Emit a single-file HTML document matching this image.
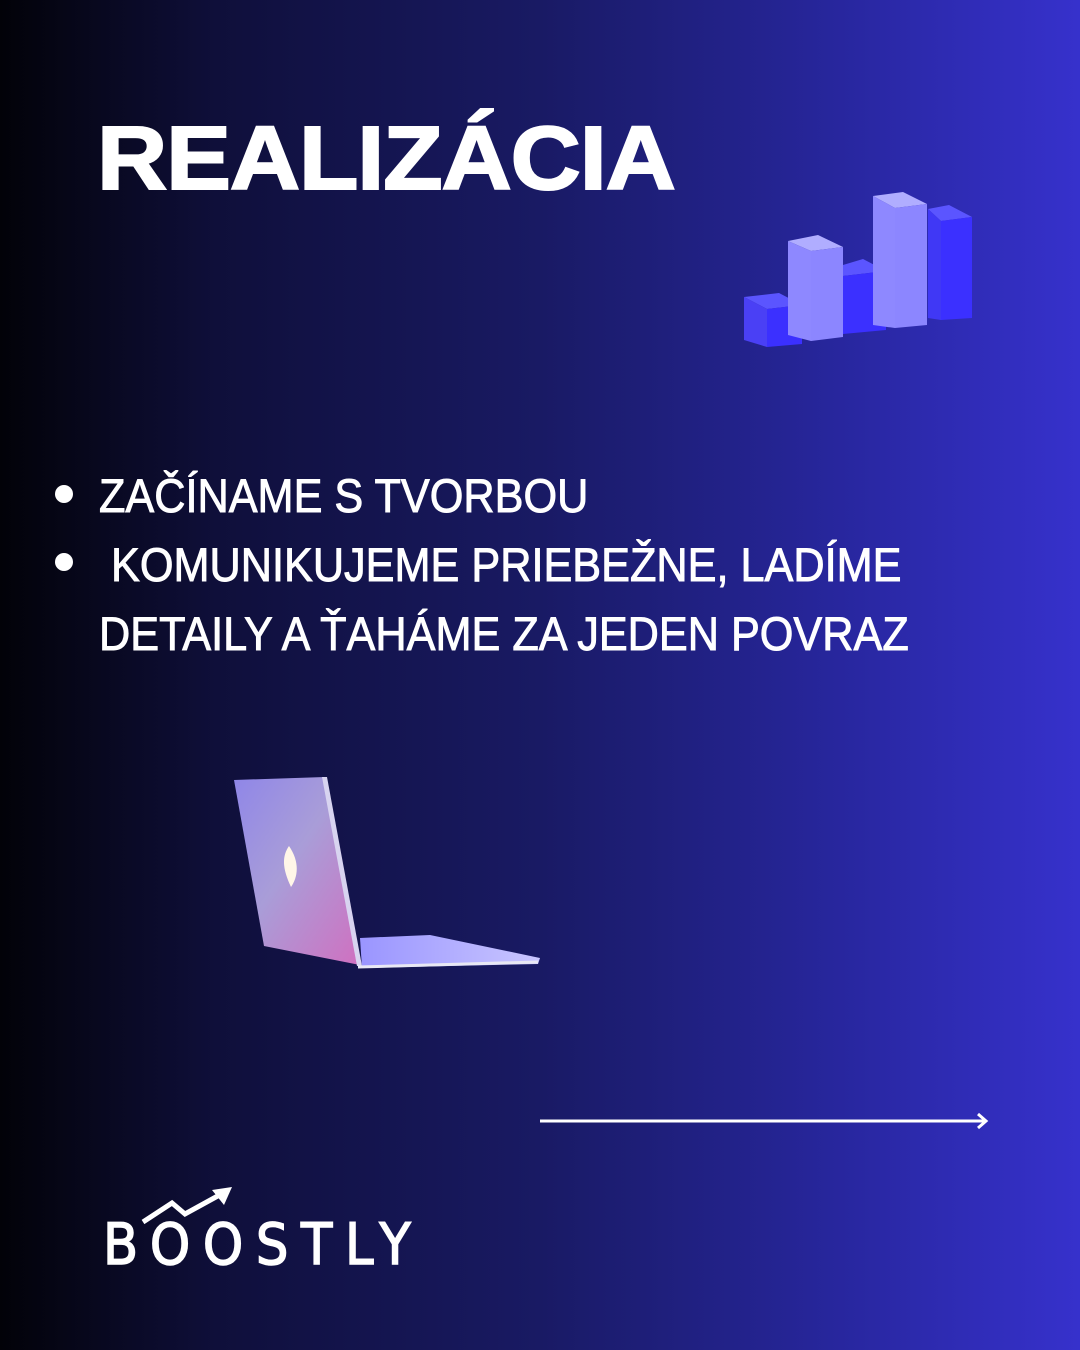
<!DOCTYPE html>
<html><head><meta charset="utf-8"><style>
html,body{margin:0;padding:0}
body{width:1080px;height:1350px;overflow:hidden;position:relative;background:linear-gradient(90deg,#020208 0%,#0f0f3a 20%,#191a64 50%,#262598 75%,#3631cc 100%);font-family:"Liberation Sans",sans-serif;color:#fff}
.t{position:absolute;left:97px;top:108px;font-size:90px;font-weight:bold;letter-spacing:-1px;transform-origin:left top;transform:scaleX(1.08);white-space:nowrap;-webkit-text-stroke:2px #fff}
.b{position:absolute;font-size:47px;transform-origin:left top;transform:scaleX(0.92);white-space:nowrap;line-height:1;-webkit-text-stroke:0.9px #fff}
.dot{position:absolute;width:18px;height:18px;border-radius:50%;background:#fff}
</style></head><body>
<div class="t">REALIZÁCIA</div>
<div class="dot" style="left:55px;top:485px"></div>
<div class="dot" style="left:55px;top:553px"></div>
<div class="b" style="left:99px;top:472px">ZAČÍNAME S TVORBOU</div>
<div class="b" style="left:99px;top:541px">&nbsp;KOMUNIKUJEME PRIEBEŽNE, LADÍME</div>
<div class="b" style="left:99px;top:610px">DETAILY A ŤAHÁME ZA JEDEN POVRAZ</div>
<svg style="position:absolute;left:0;top:0" width="1080" height="1350">
<g>
<polygon points="744,297 779,293 802,305 767,309" fill="#5b55ff"/>
<polygon points="744,297 767,309 767,347 744,340" fill="#4a40f5"/>
<polygon points="767,309 802,305 802,344 767,347" fill="#3b30ff"/>
<polygon points="843,265 863,259 886,271 843,276" fill="#5b55ff"/>
<polygon points="843,276 886,271 886,330 843,334" fill="#3b30ff"/>
<polygon points="788,241 818,235 843,247 811,251" fill="#b0adff"/>
<polygon points="788,241 811,251 811,341 788,335" fill="#8e88ff"/>
<polygon points="811,251 843,247 843,337 811,341" fill="#8c86ff"/>
<polygon points="928,209 949,205 972,217 941,221" fill="#5b55ff"/>
<polygon points="928,209 941,221 941,320 928,318" fill="#4038f5"/>
<polygon points="941,221 972,217 972,318 941,320" fill="#3b30ff"/>
<polygon points="873,196 903,192 927,204 895,208" fill="#b0adff"/>
<polygon points="873,196 895,208 895,328 873,325" fill="#8e88ff"/>
<polygon points="895,208 927,204 927,325 895,328" fill="#8c86ff"/>
</g>
<defs>
<linearGradient id="lid" x1="0" y1="0" x2="1" y2="1">
<stop offset="0" stop-color="#8f86e8"/><stop offset="0.45" stop-color="#a99dd8"/><stop offset="1" stop-color="#d070c0"/></linearGradient>
<linearGradient id="base" x1="0" y1="0" x2="1" y2="0">
<stop offset="0" stop-color="#9a95ff"/><stop offset="1" stop-color="#c9c6ff"/></linearGradient>
</defs>
<polygon points="360,938 430,935 540,958 538,964 362,968" fill="url(#base)"/>
<polygon points="234,780 325,777 360,965 264,946" fill="url(#lid)"/>
<polygon points="322,777 327,777 362,966 357,966" fill="#d8d4f0"/>
<path d="M289,846 C282,856 282,868 291,887 C298,877 300,862 289,846Z" fill="#fff6e8"/>
<line x1="358" y1="967" x2="538" y2="962" stroke="#e8e8f4" stroke-width="3"/>
<line x1="540" y1="1121" x2="985" y2="1121" stroke="#fff" stroke-width="3"/>
<polyline points="978,1114 986,1121 978,1128" fill="none" stroke="#fff" stroke-width="3"/>
<polyline points="143,1222 172,1203 185,1214 225,1192" fill="none" stroke="#fff" stroke-width="5"/>
<polygon points="212,1190 232,1187 224,1205" fill="#fff"/>
</svg>
<div style="position:absolute;left:103px;top:1212px;font-size:57px;letter-spacing:14px;font-family:'DejaVu Sans',sans-serif;transform-origin:left top;transform:scaleX(0.9);-webkit-text-stroke:1.5px #fff">BOOSTLY</div>
</body></html>
